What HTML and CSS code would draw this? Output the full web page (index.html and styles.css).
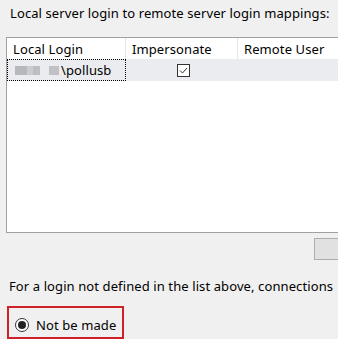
FILE: index.html
```html
<!DOCTYPE html>
<html>
<head>
<meta charset="utf-8">
<link rel="stylesheet" href="styles.css">
</head>
<body>
<div class="page">
  <div class="title">Local server login to remote server login mappings:</div>
  <div class="grid">
    <div class="row head">
      <div class="cell c1">Local Login</div>
      <div class="cell c2">Impersonate</div>
      <div class="cell c3">Remote User</div>
    </div>
    <div class="row data">
      <div class="cell c1 focus"><span class="blur"><i class="b1"></i><i class="b2"></i><i class="b3"></i><i class="b4"></i></span>\pollusb</div>
      <div class="cell c2 center"><span class="check"><svg width="13" height="13" viewBox="0 0 13 13"><rect x="0.5" y="0.5" width="12" height="12" fill="#fff" stroke="#333"/><path d="M3 6.5 L5.5 9 L10 4" fill="none" stroke="#333" stroke-width="1"/></svg></span></div>
      <div class="cell c3"></div>
    </div>
  </div>
  <div class="btnrow"><div class="btn"></div></div>
  <div class="note">For a login not defined in the list above, connections</div>
  <div class="choice">
    <span class="radio"><span class="dot"></span></span>
    <span class="label">Not be made</span>
  </div>
</div>
</body>
</html>
```
FILE: styles.css
```css
html, body {
  margin: 0;
  padding: 0;
  background: #f0f0f0;
  overflow: hidden;
}
body {
  width: 338px;
  height: 339px;
  font-family: "Noto Sans", "Liberation Sans", sans-serif;
  font-size: 13px;
  letter-spacing: 0.1px;
  color: #000;
}
.page {
  width: 420px;
  display: flex;
  flex-direction: column;
}
.title {
  padding: 5px 0 0 10px;
  height: 17px;
  line-height: 17px;
  white-space: nowrap;
}
.grid {
  margin: 15px 0 0 6px;
  height: 194px;
  border: 1px solid #a0a0a0;
  border-right: none;
  background: #fff;
}
.row {
  display: flex;
  height: 22px;
}
.head {
  height: 21px;
}
.cell {
  display: flex;
  align-items: center;
  white-space: nowrap;
  box-sizing: border-box;
}
.head .cell {
  padding-left: 6px;
  border-right: 1px solid #e5e5e5;
}
.c1 { width: 119px; }
.c2 { width: 112px; }
.c3 { flex: 1; }
.data {
  background: #eaecef;
}
.data .c1 {
  border: 1px dotted #000;
  padding-left: 7px;
}
.center { justify-content: center; }
.check {
  display: flex;
  margin-left: 2px;
}
.blur {
  display: inline-flex;
  align-items: center;
  margin-right: 2px;
}
.blur i {
  display: block;
  height: 9px;
  background: #b0b3b7;
}
.b1 { width: 12px; opacity: .9; }
.b2 { width: 6px; opacity: .55; }
.b3 { width: 7px; margin-right: 9px; opacity: .8; }
.b4 { width: 10px; opacity: .75; }
.btnrow {
  display: flex;
  padding: 5px 0 0 314px;
}
.btn {
  width: 80px;
  height: 20px;
  border: 1px solid #adadad;
  background: #e1e1e1;
}
.note {
  padding: 17px 0 0 9px;
  line-height: 18px;
  white-space: nowrap;
}
.choice {
  margin: 11px 0 0 7px;
  width: 117px;
  height: 33px;
  border: 2px solid #d0202a;
  display: flex;
  align-items: center;
  padding-top: 5px;
  box-sizing: border-box;
}
.radio {
  width: 14px;
  height: 14px;
  border: 1px solid #333;
  border-radius: 50%;
  background: #fff;
  display: flex;
  align-items: center;
  justify-content: center;
  margin-left: 6px;
  box-sizing: border-box;
}
.dot {
  width: 8px;
  height: 8px;
  border-radius: 50%;
  background: #222;
}
.label {
  margin-left: 7px;
  line-height: 16px;
}
```
